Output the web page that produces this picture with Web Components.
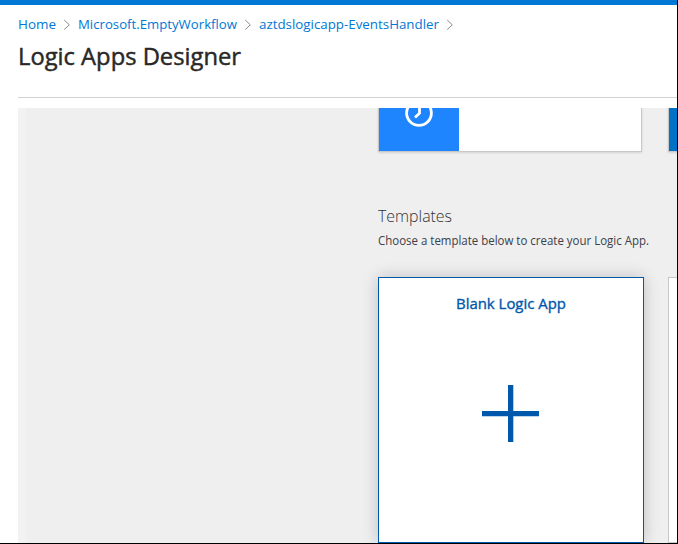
<!DOCTYPE html>
<html lang="en">
<head>
<meta charset="utf-8">
<title>Logic Apps Designer</title>
<style>
html, body { margin: 0; height: 100%; overflow: hidden; }
body { font-family: "Open Sans", "Noto Sans", sans-serif; background: #fff; }
</style>
</head>
<body>
<designer-page></designer-page>
<script>
class BaseElement extends HTMLElement {
  render(html) {
    const t = document.createElement('template');
    t.innerHTML = html;
    this.attachShadow({ mode: 'open' }).append(t.content.cloneNode(true));
  }
}

/* A single line of text that is condensed or widened to a given width. */
customElements.define('fit-text', class extends BaseElement {
  connectedCallback() {
    if (this.shadowRoot) return;
    const w = Number(this.getAttribute('width'));
    this.render(`<style>
      :host { display: block; width: ${w}px; white-space: nowrap; }
      span { display: inline-block; transform-origin: 0 50%; }
    </style><span><slot></slot></span>`);
    const s = this.shadowRoot.querySelector('span');
    s.style.transform = `scaleX(${w / s.getBoundingClientRect().width})`;
  }
});

customElements.define('crumb-item', class extends BaseElement {
  connectedCallback() {
    if (this.shadowRoot) return;
    this.render(`<style>
      :host { display: flex; align-items: center; font-size: 13.4px; line-height: 18px; color: #0078d4; }
      svg { display: block; margin: 1px 7px 0 7px; }
    </style>
    <fit-text width="${this.getAttribute('width')}"><slot></slot></fit-text>
    <svg width="8" height="12" viewBox="0 0 8 12"><path d="M1.2 1 L6.3 5.8 L1.2 10.6" fill="none" stroke="#8c8c8c" stroke-width="1"/></svg>`);
  }
});

customElements.define('page-header', class extends BaseElement {
  connectedCallback() {
    if (this.shadowRoot) return;
    this.render(`<style>
      :host { display: block; box-sizing: border-box; height: 103px; padding-left: 18px; border-top: 5px solid #0078d4; }
      .inner { box-sizing: border-box; height: 93px; padding-top: 10px; border-bottom: 1px solid #d2d2d2; }
      nav { display: flex; }
      h1 { margin: 7px 0 0; font-size: 23px; line-height: 32px; font-weight: 400; color: #292827; -webkit-text-stroke: .45px #292827; }
    </style>
    <div class="inner">
      <nav><slot name="crumbs"></slot></nav>
      <h1><slot name="title"></slot></h1>
    </div>`);
  }
});

customElements.define('trigger-card', class extends BaseElement {
  connectedCallback() {
    if (this.shadowRoot) return;
    this.render(`<style>
      :host { display: flex; box-sizing: border-box; width: 264px; height: 44px; background: #fff;
        border: 1px solid #c8c8c8; border-top: 0; box-shadow: 0 1px 2px rgba(0,0,0,.12); }
      .tile { width: 80px; background: var(--tile); overflow: hidden; }
      ::slotted(svg) { display: block; margin-left: 25px; }
    </style><div class="tile"><slot></slot></div>`);
  }
});

customElements.define('template-card', class extends BaseElement {
  connectedCallback() {
    if (this.shadowRoot) return;
    this.render(`<style>
      :host { display: flex; flex-direction: column; align-items: center; box-sizing: border-box;
        width: 266px; height: 266px; background: #fff; border: 1px solid #c8c8c8; color: #0058ad;
        padding: 15px 1px 0 0; font-size: 14.2px; line-height: 22px; font-weight: 400; -webkit-text-stroke: .35px #0058ad; }
      :host([selected]) { border-color: #0058ad; box-shadow: 0 0 15px rgba(0,0,0,.2); }
      ::slotted(svg) { display: block; margin-top: 70px; }
    </style><slot></slot>`);
  }
});

customElements.define('designer-canvas', class extends BaseElement {
  connectedCallback() {
    if (this.shadowRoot) return;
    this.render(`<style>
      :host { display: block; box-sizing: border-box; flex: 1; min-height: 0; margin: 5px 0 0 18px;
        border-left: 8px solid #f2f2f2; background: #efefef; padding-left: 352px; overflow: hidden; }
      .row { display: grid; grid-template-columns: 266px 266px; column-gap: 24px; width: 556px; }
      .intro { padding: 52px 0 28px; }
      h2 { margin: 0; font-size: 17px; line-height: 24px; font-weight: 300; color: #323232; }
      p { margin: 4px 0 0; font-size: 11.8px; line-height: 17px; color: #3b4047; }
    </style>
    <div class="row">
      <trigger-card style="--tile:#1e85ff">
        <svg width="30" height="20" viewBox="0 0 30 20" fill="none" stroke="#fff" stroke-width="2.8">
          <circle cx="15" cy="5" r="12.4"/><path d="M15.5 -3 V5.2 L11 9.4"/>
        </svg>
      </trigger-card>
      <trigger-card style="--tile:#0072c6"></trigger-card>
    </div>
    <div class="intro">
      <h2><fit-text width="74">Templates</fit-text></h2>
      <p><fit-text width="271">Choose a template below to create your Logic App.</fit-text></p>
    </div>
    <div class="row">
      <template-card selected>
        <fit-text width="110">Blank Logic App</fit-text>
        <svg width="57" height="57" viewBox="0 0 57 57" fill="#0058ad"><path d="M26 0h5.3v26h25.7v5.3h-25.7v25.7h-5.3v-25.7h-26v-5.3h26z"/></svg>
      </template-card>
      <template-card></template-card>
    </div>`);
  }
});

customElements.define('designer-page', class extends BaseElement {
  connectedCallback() {
    if (this.shadowRoot) return;
    this.render(`<style>
      :host { display: flex; flex-direction: column; box-sizing: border-box; width: 678px; height: 544px;
        border-right: 1px solid #000; border-bottom: 1px solid #000; overflow: hidden; }
    </style>
    <page-header>
      <crumb-item slot="crumbs" width="38">Home</crumb-item>
      <crumb-item slot="crumbs" width="159">Microsoft.EmptyWorkflow</crumb-item>
      <crumb-item slot="crumbs" width="180">aztdslogicapp-EventsHandler</crumb-item>
      <fit-text slot="title" width="223">Logic Apps Designer</fit-text>
    </page-header>
    <designer-canvas></designer-canvas>`);
  }
});
</script>
</body>
</html>
